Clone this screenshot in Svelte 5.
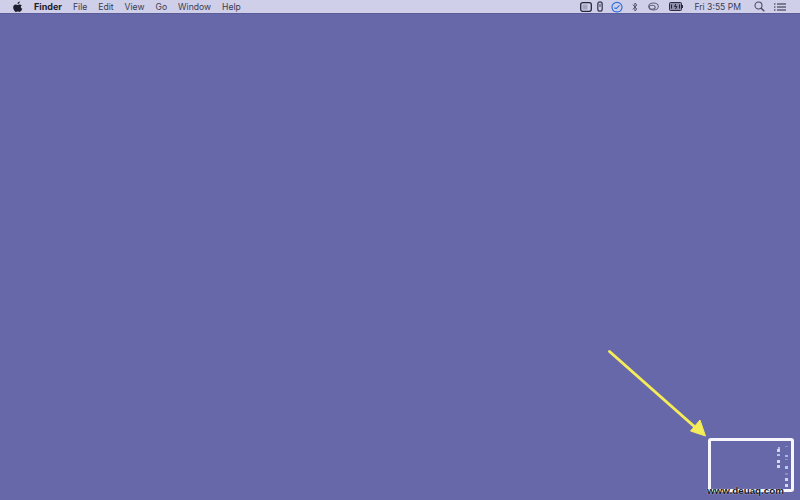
<script>
  const menus = ['File', 'Edit', 'View', 'Go', 'Window', 'Help'];
  const dots = [
    [778, 447, '#b9bbdc', 2, 2], [785, 446, '#8f90c2', 3, 1],
    [777, 449, '#d5d6ec', 3, 3], [785, 455, '#9fbde8', 3, 2],
    [777, 454, '#a9c8ee', 3, 2], [785, 459, '#8f90c2', 3, 1],
    [777, 460, '#d0dcf2', 3, 3], [785, 466, '#b3cdf0', 3, 3],
    [777, 465, '#d5d6ec', 3, 3], [785, 473, '#8a8bbe', 3, 2],
    [785, 478, '#d5d6ec', 3, 3], [785, 484, '#d5d6ec', 3, 3]
  ];
</script>

<div class="desktop">
  <header class="menubar">
    <div class="left">
      <svg class="apple" viewBox="0 0 14 16" width="10" height="11" aria-hidden="true">
        <path fill="#1d1d2e" d="M9.6 0.6c.1 1-.3 1.9-.9 2.6-.6.7-1.5 1.2-2.4 1.1-.1-.9.3-1.900.9-2.500C7.800 1.100 8.800.6 9.600.6zM12.700 5.700c-1 .6-1.600 1.500-1.600 2.700 0 1.400.8 2.400 2.100 3-.4 1.100-.8 1.900-1.500 2.900-.7 1-1.400 1.700-2.400 1.700-.9 0-1.300-.6-2.500-.6-1.200 0-1.600.6-2.500.6-1 0-1.700-.8-2.500-1.900C.6 12.600 0 10.900 0 9.300c0-2.800 1.800-4.300 3.600-4.300 1 0 1.900.7 2.600.7.6 0 1.600-.7 2.800-.7.900 0 2.600.2 3.700 1.700z"/>
      </svg>
      <span class="app">Finder</span>
      {#each menus as m}<span class="menu">{m}</span>{/each}
    </div>
    <div class="right">
      <svg class="st a" width="12" height="10" viewBox="0 0 12 10" aria-hidden="true"><rect x="0.700" y="0.700" width="10.600" height="8.600" rx="2" fill="none" stroke="#26263a" stroke-width="1.300"/><rect x="2.500" y="2.500" width="5" height="5" fill="#a5a5c6"/></svg>
      <svg class="st b" width="6" height="11" viewBox="0 0 6 11" aria-hidden="true"><rect x="0.800" y="0.800" width="4.400" height="9.400" rx="2.200" fill="none" stroke="#3a3a52" stroke-width="1.300"/><path d="M3 3v3" stroke="#3a3a52"/></svg>
      <svg class="st c" width="12" height="12" viewBox="0 0 12 12" aria-hidden="true"><path d="M3 10.300A5 5 0 1 1 9 10.300Q6 11.500 3 10.300z" fill="none" stroke="#2f6fdc" stroke-width="1.200"/><path d="M3.200 6.800l2 .8 3.300-3.300" fill="none" stroke="#2f6fdc" stroke-width="1.100"/></svg>
      <svg class="st d" width="6" height="10" viewBox="0 0 6 10" aria-hidden="true"><path d="M.8 2.600l4 4.400-1.900 2V1l1.900 2-4 4.400" fill="none" stroke="#4a4a62" stroke-width="0.900"/></svg>
      <svg class="st e" width="12" height="10" viewBox="0 0 12 10" aria-hidden="true"><ellipse cx="6.500" cy="4.500" rx="4.800" ry="3.500" fill="none" stroke="#63637e" stroke-width="1.100"/><ellipse cx="5.200" cy="5.300" rx="3" ry="2" fill="none" stroke="#63637e" stroke-width="1.100"/></svg>
      <svg class="st f" width="14" height="9" viewBox="0 0 14 9" aria-hidden="true"><rect x="0.500" y="0.500" width="12" height="8" rx="1" fill="#8e8eac" stroke="#2c2c40"/><rect x="12.800" y="3" width="1.200" height="3" fill="#2c2c40"/><path d="M2.500 2.500v4M6.800 2l-1.300 2.500h2.400L6.500 7M10.500 2.500v4" stroke="#22222f" fill="none"/></svg>
      <span class="clock">Fri 3:55 PM</span>
      <svg class="st g" width="11" height="11" viewBox="0 0 11 11" aria-hidden="true"><circle cx="4.500" cy="4.500" r="3.500" fill="none" stroke="#4a4a62" stroke-width="1.100"/><path d="M7 7l3.300 3.300" stroke="#4a4a62" stroke-width="1.400"/></svg>
      <svg class="st h" width="12" height="8" viewBox="0 0 12 8" aria-hidden="true"><path d="M0 1h1.500M0 4h1.500M0 7h1.500M3 1h9M3 4h9M3 7h9" stroke="#27273a" stroke-width="1.200"/></svg>
    </div>
  </header>

  <svg class="arrow" width="800" height="500" viewBox="0 0 800 500" aria-hidden="true">
    <path d="M609.500 351.500L696 428" stroke="#f4ec58" stroke-width="3" stroke-linecap="round"/>
    <path d="M705.500 436L690.500 431 700 420z" fill="#f4ec58" stroke="#f4ec58" stroke-linejoin="round"/>
  </svg>

  <div class="frame"></div>
  {#each dots as d}
    <i class="dot" style="left:{d[0]}px;top:{d[1]}px;width:{d[3]}px;height:{d[4]}px;background:{d[2]}"></i>
  {/each}
  <div class="mark">www.deuaq.com</div>
</div>

<style>
  :global(body) { margin: 0; }
  .desktop {
    position: relative;
    width: 800px;
    height: 500px;
    overflow: hidden;
    background: #6768a9;
    font-family: "Inter", "Liberation Sans", sans-serif;
  }
  .menubar {
    display: flex;
    justify-content: space-between;
    align-items: center;
    height: 13px;
    background: #cfcfe9;
    color: #2a2a3e;
    font-size: 8.600px;
    box-shadow: 0 1px 0 #5b5c98;
  }
  .left, .right { display: flex; align-items: center; }
  .left { padding-left: 13px; }
  .right { padding-right: 14px; }
  .app { margin-left: 11px; font-weight: 700; font-size: 9px; color: #1d1d2e; }
  .menu { margin-left: 11px; color: #3a3a50; }
  .st { flex: none; }
  .b { margin-left: 5px; }
  .c { margin-left: 8px; }
  .d { margin-left: 9px; }
  .e { margin-left: 9px; }
  .f { margin-left: 10px; }
  .clock { margin-left: 11px; color: #3a3a50; }
  .g { margin-left: 13px; }
  .h { margin-left: 9px; }
  .arrow, .frame, .dot, .mark { position: absolute; }
  .arrow { left: 0; top: 0; }
  .frame {
    left: 708px;
    top: 438px;
    width: 80px;
    height: 48px;
    border: 3px solid #f6f6fc;
    border-radius: 3px;
  }
  .mark {
    left: 707px;
    top: 485px;
    font-family: "Liberation Sans", sans-serif;
    font-size: 9.800px;
    font-weight: 700;
    line-height: 12px;
    white-space: nowrap;
    color: #14141c;
    text-shadow: 0 0 1px #ffffff;
  }
</style>
